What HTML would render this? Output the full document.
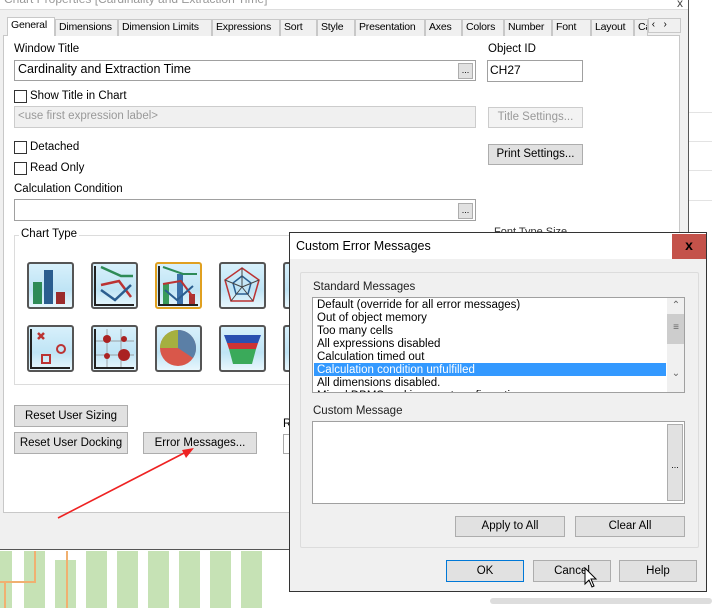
<!DOCTYPE html>
<html><head><meta charset="utf-8">
<style>
*{box-sizing:border-box;margin:0;padding:0}
body{width:712px;height:608px;overflow:hidden;background:#fff;font-family:"Liberation Sans",sans-serif;font-size:12px;color:#000;position:relative}
.a{position:absolute}
.btn{position:absolute;background:#e1e1e1;border:1px solid #adadad;text-align:center;font-size:11.5px;line-height:19px;color:#000}
.inp{position:absolute;background:#fff;border:1px solid #a0a0a0}
.cb{position:absolute;width:13px;height:13px;border:1px solid #333;background:#fff}
.tab{position:absolute;top:19px;height:17px;border:1px solid #c8c8c8;border-bottom:none;background:#f0f0f0;font-size:10.5px;line-height:15px;padding-left:3px;white-space:nowrap;overflow:hidden;letter-spacing:-0.2px}
.ic{position:absolute;width:47px;height:47px;border:2px solid #555;border-radius:3px;background:linear-gradient(180deg,#d7f0fb,#bfe4f5 60%,#e9f7fd)}
.li{position:absolute;left:4px;font-size:11.5px;line-height:13px;white-space:nowrap}
</style></head><body>
<div class="a" style="left:688px;top:0;width:24px;height:608px;background:#fff"></div>
<div class="a" style="left:688px;top:112px;width:24px;height:1px;background:#e3e3e3"></div>
<div class="a" style="left:688px;top:141px;width:24px;height:1px;background:#e3e3e3"></div>
<div class="a" style="left:688px;top:170px;width:24px;height:1px;background:#e3e3e3"></div>
<div class="a" style="left:688px;top:200px;width:24px;height:1px;background:#e3e3e3"></div>
<div class="a" style="left:0;top:0;width:689px;height:550px;background:#f0f0f0;border-right:1px solid #555;border-bottom:1px solid #555"></div>
<div class="a" style="left:0;top:-8px;width:688px;height:18px;background:#fff;border-bottom:1px solid #ddd;color:#999;font-size:12px;padding-left:4px;line-height:14px">Chart Properties [Cardinality and Extraction Time]</div>
<div class="a" style="left:677px;top:-4px;color:#444;font-size:12px">x</div>
<div class="a" style="left:3px;top:35px;width:677px;height:478px;background:#fff;border:1px solid #c8c8c8"></div>
<div class="tab" style="left:7px;top:17px;height:19px;width:48px;background:#fff;z-index:2">General</div>
<div class="tab" style="left:55px;width:63px">Dimensions</div>
<div class="tab" style="left:118px;width:94px">Dimension Limits</div>
<div class="tab" style="left:212px;width:68px">Expressions</div>
<div class="tab" style="left:280px;width:37px">Sort</div>
<div class="tab" style="left:317px;width:38px">Style</div>
<div class="tab" style="left:355px;width:70px">Presentation</div>
<div class="tab" style="left:425px;width:37px">Axes</div>
<div class="tab" style="left:462px;width:42px">Colors</div>
<div class="tab" style="left:504px;width:48px">Number</div>
<div class="tab" style="left:552px;width:39px">Font</div>
<div class="tab" style="left:591px;width:43px">Layout</div>
<div class="tab" style="left:634px;width:14px">Ca</div>
<div class="a" style="left:648px;top:18px;width:33px;height:15px;background:#f0f0f0;border:1px solid #c8c8c8;font-size:10px;line-height:12px">&nbsp;&lsaquo;&nbsp;&nbsp;&nbsp;&rsaquo;</div>

<div class="a" style="left:14px;top:43px;font-size:11.5px">Window Title</div>
<div class="inp" style="left:14px;top:60px;width:462px;height:21px;padding:1px 3px;font-size:12.5px">Cardinality and Extraction Time</div>
<div class="a" style="left:458px;top:63px;width:15px;height:16px;background:#e1e1e1;border:1px solid #adadad;font-size:9px;text-align:center;line-height:12px">...</div>
<div class="a" style="left:488px;top:43px;font-size:11.5px">Object ID</div>
<div class="inp" style="left:487px;top:60px;width:96px;height:22px;padding:2px 2px;font-size:12px">CH27</div>

<div class="cb" style="left:14px;top:90px"></div><div class="a" style="left:30px;top:90px;font-size:11.5px">Show Title in Chart</div>
<div class="a" style="left:14px;top:106px;width:462px;height:22px;background:#f0f0f0;border:1px solid #ccc;color:#999;font-size:11.5px;padding:3px 3px">&lt;use first expression label&gt;</div>
<div class="btn" style="left:488px;top:107px;width:95px;height:21px;color:#999;background:#f3f3f3;border-color:#ccc">Title Settings...</div>
<div class="cb" style="left:14px;top:141px"></div><div class="a" style="left:30px;top:141px;font-size:11.5px">Detached</div>
<div class="btn" style="left:488px;top:144px;width:95px;height:21px">Print Settings...</div>
<div class="cb" style="left:14px;top:162px"></div><div class="a" style="left:30px;top:162px;font-size:11.5px">Read Only</div>
<div class="a" style="left:14px;top:183px;font-size:11.5px">Calculation Condition</div>
<div class="inp" style="left:14px;top:199px;width:462px;height:22px"></div>
<div class="a" style="left:458px;top:203px;width:15px;height:16px;background:#e1e1e1;border:1px solid #adadad;font-size:9px;text-align:center;line-height:12px">...</div>
<div class="a" style="left:494px;top:226px;font-size:11px;color:#333">Font Type Size</div>

<div class="a" style="left:14px;top:235px;width:300px;height:150px;border:1px solid #dcdcdc"></div>
<div class="a" style="left:19px;top:228px;background:#fff;padding:0 2px;font-size:11.5px">Chart Type</div>

<div class="ic" style="left:27px;top:262px"><svg width="43" height="43"><rect x="4" y="18" width="9" height="22" fill="#2e8b57"/><rect x="15" y="6" width="9" height="34" fill="#2a5d8f"/><rect x="27" y="28" width="9" height="12" fill="#9b2c2c"/></svg></div>
<div class="ic" style="left:91px;top:262px"><svg width="43" height="43"><path d="M2 2V41H41" stroke="#222" stroke-width="2" fill="none"/><path d="M8 3L28 12H40" stroke="#2e8b57" stroke-width="2.5" fill="none"/><path d="M8 21L26 17L38 33" stroke="#b33" stroke-width="2.5" fill="none"/><path d="M8 26L22 36L38 21" stroke="#2a5d8f" stroke-width="2.5" fill="none"/></svg></div>
<div class="ic" style="left:155px;top:262px;border-color:#e0a020"><svg width="43" height="43"><rect x="6" y="20" width="6" height="20" fill="#3a9a5a"/><rect x="20" y="10" width="6" height="30" fill="#3a6fa8"/><rect x="32" y="30" width="6" height="10" fill="#a33"/><path d="M2 2V41H41" stroke="#222" stroke-width="2" fill="none"/><path d="M6 3L26 10H40" stroke="#2e8b57" stroke-width="2" fill="none"/><path d="M6 20L24 17L36 33" stroke="#b33" stroke-width="2" fill="none"/><path d="M8 26L20 36L36 22" stroke="#2a5d8f" stroke-width="2" fill="none"/></svg></div>
<div class="ic" style="left:219px;top:262px"><svg width="43" height="43"><polygon points="21,4 38,16 32,37 10,37 4,16" fill="none" stroke="#b33" stroke-width="1.5"/><polygon points="21,12 30,19 27,30 15,30 12,19" fill="none" stroke="#2a5d8f" stroke-width="1.5"/><path d="M21 4V23M38 16L21 23M32 37L21 23M10 37L21 23M4 16L21 23" stroke="#444"/></svg></div>
<div class="ic" style="left:283px;top:262px;width:10px;border-right:none"></div>
<div class="ic" style="left:27px;top:325px"><svg width="43" height="43"><path d="M2 2V41H41" stroke="#222" stroke-width="2" fill="none"/><path d="M9 6L15 12M15 6L9 12" stroke="#b33" stroke-width="2.5"/><circle cx="32" cy="22" r="4" fill="none" stroke="#b33" stroke-width="2"/><rect x="13" y="28" width="8" height="8" fill="none" stroke="#b33" stroke-width="2"/></svg></div>
<div class="ic" style="left:91px;top:325px"><svg width="43" height="43"><path d="M2 2V41H41M2 14H41M2 28H41M14 2V41M28 2V41" stroke="#888" stroke-width=".7" fill="none"/><path d="M2 2V41H41" stroke="#222" stroke-width="2" fill="none"/><circle cx="14" cy="12" r="4" fill="#a22"/><circle cx="31" cy="12" r="3" fill="#a22"/><circle cx="14" cy="29" r="3" fill="#a22"/><circle cx="31" cy="28" r="6" fill="#a22"/></svg></div>
<div class="ic" style="left:155px;top:325px"><svg width="43" height="43"><circle cx="21" cy="21" r="18" fill="#d9574a"/><path d="M21 21V3A18 18 0 0 1 36 31Z" fill="#5b7fa6"/><path d="M21 21L3 21A18 18 0 0 1 21 3Z" fill="#a5b040"/></svg></div>
<div class="ic" style="left:219px;top:325px"><svg width="43" height="43"><polygon points="3,8 40,8 37,16 6,16" fill="#2a4fb0"/><polygon points="6,16 37,16 35,22 8,22" fill="#c33"/><polygon points="8,22 35,22 31,37 12,37" fill="#3aaa5a"/></svg></div>
<div class="ic" style="left:283px;top:325px;width:10px;border-right:none"></div>

<div class="btn" style="left:14px;top:405px;width:114px;height:22px;line-height:20px">Reset User Sizing</div>
<div class="btn" style="left:14px;top:432px;width:114px;height:22px;line-height:20px">Reset User Docking</div>
<div class="btn" style="left:143px;top:432px;width:114px;height:22px;line-height:20px">Error Messages...</div>
<div class="a" style="left:283px;top:418px;font-size:11.5px">R</div>
<div class="a" style="left:283px;top:434px;width:8px;height:20px;border:1px solid #aaa;background:#fff"></div>

<div class="a" style="left:0;top:551px;width:290px;height:57px;background:#fff"></div>
<div class="a" style="left:0;top:551px;width:12px;height:57px;background:#c6e2b5"></div>
<div class="a" style="left:24px;top:551px;width:21px;height:57px;background:#c6e2b5"></div>
<div class="a" style="left:55px;top:560px;width:21px;height:48px;background:#c6e2b5"></div>
<div class="a" style="left:86px;top:551px;width:21px;height:57px;background:#c6e2b5"></div>
<div class="a" style="left:117px;top:551px;width:21px;height:57px;background:#c6e2b5"></div>
<div class="a" style="left:148px;top:551px;width:21px;height:57px;background:#c6e2b5"></div>
<div class="a" style="left:179px;top:551px;width:21px;height:57px;background:#c6e2b5"></div>
<div class="a" style="left:210px;top:551px;width:21px;height:57px;background:#c6e2b5"></div>
<div class="a" style="left:241px;top:551px;width:21px;height:57px;background:#c6e2b5"></div>
<div class="a" style="left:0;top:581px;width:36px;height:2px;border-top:2px solid #f0b070"></div>
<div class="a" style="left:34px;top:551px;width:2px;height:32px;background:#f0b070"></div>
<div class="a" style="left:4px;top:581px;width:2px;height:27px;background:#f0b070"></div>
<div class="a" style="left:66px;top:551px;width:2px;height:57px;background:#f0b070"></div>
<div class="a" style="left:490px;top:598px;width:222px;height:6px;background:#ddd;border-radius:3px"></div>
<div class="a" style="left:700px;top:500px;font-size:10px;color:#555;line-height:13px">0<br>0<br>0<br>0<br>0<br>0<br>0</div>

<svg class="a" style="left:50px;top:440px" width="150" height="90"><line x1="8" y1="78" x2="140" y2="10" stroke="#e22" stroke-width="1.6"/><polygon points="144,8 132,10 136,18" fill="#e22"/></svg>

<div class="a" style="left:289px;top:232px;width:418px;height:360px;background:#f0f0f0;border:1px solid #333"></div>
<div class="a" style="left:290px;top:233px;width:416px;height:26px;background:#fff;font-size:12.5px;padding:6px 0 0 6px">Custom Error Messages</div>
<div class="a" style="left:672px;top:234px;width:34px;height:25px;background:#c4524a;color:#000;font-weight:bold;text-align:center;font-size:14px;line-height:23px">x</div>
<div class="a" style="left:300px;top:272px;width:399px;height:276px;border:1px solid #dcdcdc;border-radius:2px"></div>
<div class="a" style="left:313px;top:281px;font-size:11.5px;color:#222">Standard Messages</div>
<div class="a" style="left:312px;top:297px;width:373px;height:96px;background:#fff;border:1px solid #a0a0a0;overflow:hidden">
<div class="li" style="top:1px">Default (override for all error messages)</div>
<div class="li" style="top:14px">Out of object memory</div>
<div class="li" style="top:27px">Too many cells</div>
<div class="li" style="top:40px">All expressions disabled</div>
<div class="li" style="top:53px">Calculation timed out</div>
<div class="a" style="left:1px;top:65px;width:352px;height:13px;background:#3399ff"></div>
<div class="li" style="top:66px;color:#fff">Calculation condition unfulfilled</div>
<div class="li" style="top:79px">All dimensions disabled.</div>
<div class="li" style="top:92px">Mixed DBMS and incorrect configuration</div>
<div class="a" style="left:354px;top:0;width:18px;height:95px;background:#f0f0f0;font-size:10px;color:#666;text-align:center">
<div style="margin-top:2px">&#8963;</div>
<div style="margin-top:3px;height:30px;background:#cdcdcd;line-height:28px">&#8801;</div>
<div style="margin-top:24px">&#8964;</div></div>
</div>
<div class="a" style="left:313px;top:405px;font-size:11.5px;color:#222">Custom Message</div>
<div class="a" style="left:312px;top:421px;width:373px;height:83px;background:#fff;border:1px solid #a0a0a0"></div>
<div class="a" style="left:667px;top:424px;width:16px;height:77px;background:#e1e1e1;border:1px solid #adadad;font-size:9px;text-align:center;line-height:80px">...</div>
<div class="btn" style="left:455px;top:516px;width:110px;height:21px">Apply to All</div>
<div class="btn" style="left:575px;top:516px;width:110px;height:21px">Clear All</div>
<div class="btn" style="left:446px;top:560px;width:78px;height:22px;line-height:20px;border-color:#0078d7">OK</div>
<div class="btn" style="left:533px;top:560px;width:78px;height:22px;line-height:20px">Cancel</div>
<div class="btn" style="left:619px;top:560px;width:78px;height:22px;line-height:20px">Help</div>
<svg class="a" style="left:584px;top:567px" width="14" height="22"><path d="M1 1V17L5 13L8 20L10 19L7 12H12Z" fill="#fff" stroke="#000"/></svg>
</body></html>
